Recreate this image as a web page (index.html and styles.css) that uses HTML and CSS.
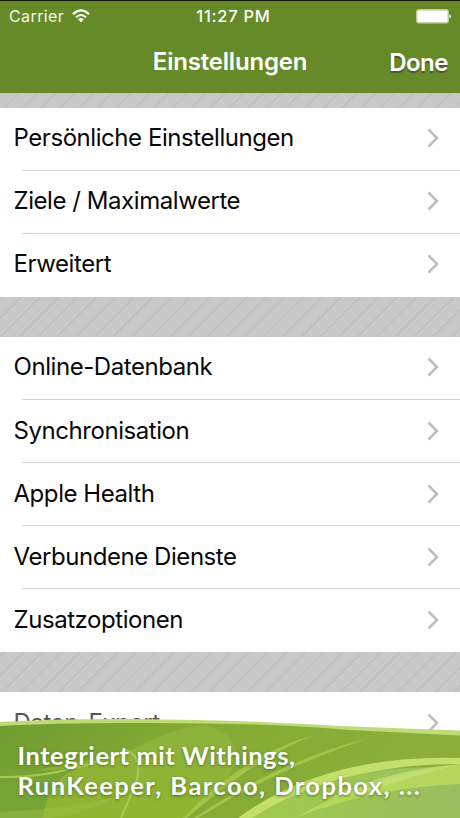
FILE: index.html
```html
<!DOCTYPE html>
<html lang="de">
<head>
<meta charset="utf-8">
<title>Einstellungen</title>
<link rel="stylesheet" href="styles.css">
</head>
<body>
<svg class="defs" width="0" height="0"><symbol id="chev" viewBox="0 0 12 20"><path d="M1.500 1.500 10 10 1.500 18.500" fill="none" stroke="#bdbdc0" stroke-width="2.500"/></symbol></svg>
<div class="screen">
  <header class="header">
    <div class="status">
      <div class="carrier"><span>Carrier</span>
        <svg class="wifi" viewBox="0 0 18 14" width="18" height="14"><g fill="none" stroke="#fff" stroke-width="2"><path d="M1 5.200Q9-2.400 17 5.200"/><path d="M4 8.300Q9 3.800 14 8.300"/></g><path d="M6 10.200Q9 7.600 12 10.200L9 13.200Z" fill="#fff"/></svg>
      </div>
      <div class="time">11:27 PM</div>
      <svg class="battery" viewBox="0 0 36 15" width="36" height="15"><rect x=".5" y=".5" width="32" height="13.600" rx="2" fill="none" stroke="#d0deb9" stroke-width=".8"/><rect x="1.200" y="1.200" width="30.600" height="12.200" rx="1" fill="#fff"/><path d="M33.500 5q3 2.300 0 4.600Z" fill="#fff"/></svg>
    </div>
    <div class="nav"><h1 class="title">Einstellungen</h1><span class="done">Done</span></div>
  </header>
  <main class="list">
    <section class="group">
      <div class="row"><span class="label">Persönliche Einstellungen</span><svg class="chev"><use href="#chev"/></svg></div>
      <div class="row"><span class="label">Ziele / Maximalwerte</span><svg class="chev"><use href="#chev"/></svg></div>
      <div class="row"><span class="label">Erweitert</span><svg class="chev"><use href="#chev"/></svg></div>
    </section>
    <section class="group">
      <div class="row"><span class="label">Online-Datenbank</span><svg class="chev"><use href="#chev"/></svg></div>
      <div class="row"><span class="label">Synchronisation</span><svg class="chev"><use href="#chev"/></svg></div>
      <div class="row"><span class="label">Apple Health</span><svg class="chev"><use href="#chev"/></svg></div>
      <div class="row"><span class="label">Verbundene Dienste</span><svg class="chev"><use href="#chev"/></svg></div>
      <div class="row"><span class="label">Zusatzoptionen</span><svg class="chev"><use href="#chev"/></svg></div>
    </section>
    <section class="group">
      <div class="row"><span class="label export">Daten-Export</span><svg class="chev"><use href="#chev"/></svg></div>
    </section>
  </main>
  <aside class="banner">
    <svg class="art" viewBox="0 0 460 100" width="460" height="100">
      <defs>
        <linearGradient id="g" x1="0" y1="0" x2="1" y2=".2"><stop offset="0" stop-color="#6f9c30"/><stop offset=".4" stop-color="#83aa33"/><stop offset="1" stop-color="#8caf3b"/></linearGradient>
        <linearGradient id="m" x1="0" y1="0" x2="0" y2="1"><stop offset="0" stop-color="#8db23d"/><stop offset="1" stop-color="#90b52f"/></linearGradient>
        <linearGradient id="r" x1="0" y1="0" x2="1" y2="0"><stop offset="0" stop-color="#a1cb4b"/><stop offset="1" stop-color="#9abd61"/></linearGradient>
      </defs>
      <path d="M0 4Q60 .5 130 1Q250 2 340 8L460 12.500V100H0Z" fill="#bfdb78"/>
      <path d="M0 8Q60 4.500 150 5Q270 5 350 12L460 17.500V100H0Z" fill="url(#g)"/>
      <path d="M0 62Q60 45 122 37Q170 10 205 7Q238 16 237 42Q220 78 185 100H0Z" fill="url(#m)"/>
      <path d="M0 50Q30 55 75 50Q48 64 43 100H0Z" fill="#78a435"/>
      <path d="M0 94Q60 92 122 78Q75 100 45 100H0Z" fill="#9ec34c" opacity=".4"/>
      <path d="M0 59Q35 60 75 50T125 32Q145 38 135 68L121 100" fill="none" stroke="#a9cc50" stroke-width="2"/>
      <path d="M183 100Q245 35 315 17Q258 38 187 100ZM194 100Q280 42 370 20Q278 50 198 100Z" fill="#a9c84c" opacity=".85"/>
      <path d="M238 100Q330 43 460 50V100Z" fill="url(#r)"/>
      <path d="M238 100Q325 36 460 40V46Q335 46 252 100Z" fill="#c3df6c"/>
      <path d="M295 100Q360 60 460 46V66Q370 70 295 100Z" fill="#b4d65b"/>
      <path d="M330 80Q390 51 460 46Q405 60 365 75Z" fill="#c6e179" opacity=".7"/>
    </svg>
    <div class="caption"><div class="line-one">Integriert mit Withings,</div><div class="line-two">RunKeeper, Barcoo, Dropbox, ...</div></div>
  </aside>
</div>
</body>
</html>
```
FILE: styles.css
```css
* { box-sizing: border-box; }
body { margin: 0; font-family: Inter, "Liberation Sans", sans-serif; }
.defs { display: block; }
.screen {
  position: relative; width: 460px; height: 818px; overflow: hidden;
  background: repeating-linear-gradient(135deg, #c8c8c8 0 11.300px, #bbb 12.300px, #c8c8c8 13.300px);
}
.header { height: 93px; background: #668a27; color: #fff; border-top: 1px solid #101507; }
.status { display: grid; grid-template-columns: 1fr auto 1fr; align-items: center; height: 30px; padding: 0 8px 0 9px; font-size: 16px; }
.carrier { display: flex; align-items: center; gap: 8px; letter-spacing: .4px; color: #f4f8ec; }
.time { font-size: 16.500px; font-weight: 500; letter-spacing: .75px; padding-left: 6px; }
.battery { justify-self: end; }
.nav { display: grid; grid-template-columns: 1fr auto 1fr; align-items: center; height: 62px; }
.title { grid-column: 2; margin: 0; font-size: 24px; font-weight: 600; line-height: 30px; letter-spacing: -.2px; }
.done { justify-self: end; margin-right: 12px; font-size: 24px; font-weight: 600; letter-spacing: -.5px; text-shadow: 0 2px 1px #46543d; }
.list { display: flex; flex-direction: column; gap: 40px; padding-top: 14.600px; }
.group { background: #fff; }
.row {
  display: flex; align-items: center; justify-content: space-between; height: 63.100px; padding: 0 21.500px 2px 13.500px;
  font-size: 24px; letter-spacing: -.44px; color: #080808; white-space: nowrap;
  background: linear-gradient(#d4d4d4, #d4d4d4) 22px 100% / 100% 1px no-repeat;
}
.row:last-child { background: none; }
.label { padding-bottom: 1px; }
.export { color: #555; }
.chev { width: 12px; height: 20px; }
.banner { position: absolute; left: 0; bottom: 0; width: 460px; height: 100px; }
.art { display: block; }
.caption { position: absolute; left: 17.500px; top: 23px; font: 700 25.500px/29.500px Lato, sans-serif; color: #fff; white-space: nowrap; text-shadow: 0 1px 3px #4f701c; }
.line-one { letter-spacing: .55px; }
.line-two { letter-spacing: 1.450px; }
```
